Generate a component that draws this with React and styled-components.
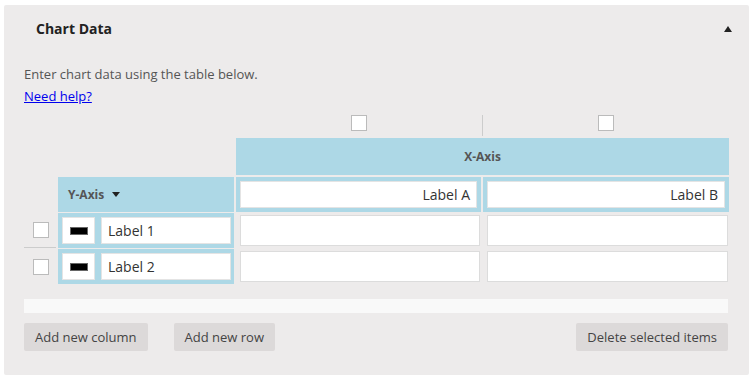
import React from 'react'
import styled, { createGlobalStyle } from 'styled-components'

const Global = createGlobalStyle`
body{
    margin: 0;
    background: #fff;
    font-family: "Open Sans", "Liberation Sans", sans-serif;
}
`

const Panel = styled.div`
margin: 5px 5px 0 4px;
width: 745px;
height: 370px;
background: #edebeb;
border-radius: 2px;
box-sizing: border-box;
`

const Header = styled.div`
display: flex;
align-items: center;
justify-content: space-between;
height: 46px;
padding: 0 17px 0 32px;
h2{
    margin: 0;
    font-size: 14px;
    font-weight: 700;
    color: #222;
}
`

const Toggle = styled.span`
width: 0;
height: 0;
border-left: 4px solid transparent;
border-right: 4px solid transparent;
border-bottom: 6px solid #222;
margin-top: 1px;
`

const Body = styled.div`
padding: 14px 20px 0 20px;
p{
    margin: 0;
    font-size: 13px;
    line-height: 19px;
    color: #555;
}
a{
    font-size: 13px;
    line-height: 19px;
    color: #0000ee;
    text-decoration: underline;
}
`

const Grid = styled.div`
display: grid;
grid-template-columns: 32px 176px 245px 246px;
grid-template-rows: 23px 39px 36px 36px 36px;
column-gap: 2px;
margin-top: 9px;
`

const ColCheck = styled.div`
display: flex;
justify-content: center;
align-items: flex-start;
position: relative;
${p => p.$divider && `
    &::after{
        content: '';
        position: absolute;
        right: -2px;
        top: 0;
        bottom: 2px;
        width: 1px;
        background: #ccc;
    }
`}
`

const Box = styled.span`
display: block;
width: 14px;
height: 14px;
background: #fff;
border: 1px solid #bbb;
`

const XHead = styled.div`
grid-column: 3 / 5;
background: #add8e6;
margin-bottom: 2px;
display: flex;
align-items: center;
justify-content: center;
font-size: 12px;
font-weight: 700;
color: #555;
`

const YHead = styled.div`
grid-column: 2;
background: #add8e6;
display: flex;
align-items: center;
padding-left: 10px;
font-size: 12px;
font-weight: 700;
color: #555;
margin-bottom: 1px;
`

const Caret = styled.span`
width: 0;
height: 0;
margin-left: 8px;
border-left: 4px solid transparent;
border-right: 4px solid transparent;
border-top: 5px solid #222;
`

const HeadCell = styled.div`
background: #add8e6;
padding: 4px;
margin-bottom: 1px;
display: flex;
`

const Field = styled.div`
flex: 1;
background: #fff;
border: 1px solid ${p => p.$soft ? '#e4e4e4' : '#dcdcdc'};
display: flex;
align-items: center;
justify-content: ${p => p.$right ? 'flex-end' : 'flex-start'};
padding: 0 6px;
font-size: 14px;
color: #333;
`

const RowCheck = styled.div`
display: flex;
align-items: center;
justify-content: center;
border-bottom: ${p => p.$line ? '1px solid #ccc' : 'none'};
margin-bottom: 1px;
padding-left: 2px;
`

const LabelCell = styled.div`
background: #add8e6;
display: flex;
gap: 6px;
padding: 4px 3px 4px 4px;
margin-bottom: 1px;
`

const Swatch = styled.div`
width: 33px;
background: #fff;
border: 1px solid #e4e4e4;
box-sizing: border-box;
display: flex;
align-items: center;
justify-content: center;
span{
    display: block;
    width: 16px;
    height: 6px;
    background: #000;
    border: 1px solid #666;
}
`

const DataCell = styled.div`
display: flex;
padding: 2px 1px 2px 4px;
margin-bottom: 1px;
`

const Strip = styled.div`
height: 14px;
width: 704px;
background: #f9f9f9;
margin-top: 14px;
`

const Actions = styled.div`
display: flex;
width: 704px;
margin-top: 10px;
gap: 26px;
`

const Button = styled.button`
height: 28px;
padding: 0 11px;
border: none;
border-radius: 2px;
background: #dcd9d9;
color: #444;
font-family: inherit;
font-size: 13px;
${p => p.$push && 'margin-left: auto;'}
`

const rows = ['Label 1', 'Label 2']

function App() {
  return (
    <Panel>
      <Global />
      <Header>
        <h2>Chart Data</h2>
        <Toggle />
      </Header>
      <Body>
        <p>Enter chart data using the table below.</p>
        <a href="#">Need help?</a>
        <Grid>
          <div />
          <div />
          <ColCheck $divider><Box /></ColCheck>
          <ColCheck><Box /></ColCheck>

          <div />
          <div />
          <XHead>X-Axis</XHead>

          <div />
          <YHead>Y-Axis<Caret /></YHead>
          <HeadCell><Field $soft $right>Label A</Field></HeadCell>
          <HeadCell><Field $soft $right>Label B</Field></HeadCell>

          {rows.map((r, i) => (
            <React.Fragment key={r}>
              <RowCheck $line={i === 0}><Box /></RowCheck>
              <LabelCell>
                <Swatch><span /></Swatch>
                <Field $soft>{r}</Field>
              </LabelCell>
              <DataCell><Field /></DataCell>
              <DataCell><Field /></DataCell>
            </React.Fragment>
          ))}
        </Grid>
        <Strip />
        <Actions>
          <Button>Add new column</Button>
          <Button>Add new row</Button>
          <Button $push>Delete selected items</Button>
        </Actions>
      </Body>
    </Panel>
  )
}

export default App
